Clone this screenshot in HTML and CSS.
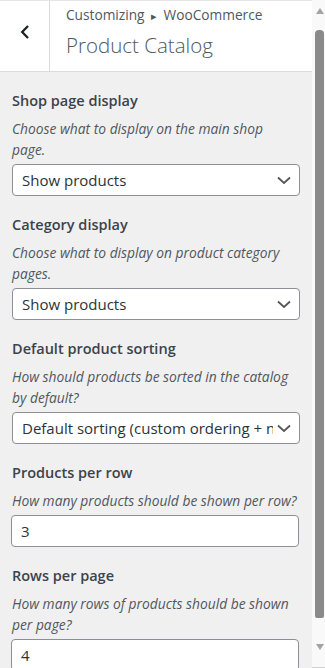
FILE: index.html
```html
<!DOCTYPE html>
<html lang="en">
<head>
  <meta charset="UTF-8">
  <title>Customizing - Product Catalog</title>
  <link rel="stylesheet" href="styles.css">
</head>
<body>
  <div class="panel">
    <div class="panel-header">
      <button class="back-btn" type="button" aria-label="Back">
        <svg width="10" height="14" viewBox="0 0 10 14"><path d="M8 1 L2.2 7 L8 13" fill="none" stroke="#1d2327" stroke-width="2.3"/></svg>
      </button>
      <div class="panel-title">
        <span class="crumb">Customizing <span class="sep">&#9656;</span> WooCommerce</span>
        <h3>Product Catalog</h3>
      </div>
    </div>

    <ul class="controls">
      <li class="control">
        <label class="control-title">Shop page display</label>
        <span class="control-desc">Choose what to display on the main shop<br>page.</span>
        <select>
          <option>Show products</option>
        </select>
      </li>
      <li class="control">
        <label class="control-title">Category display</label>
        <span class="control-desc">Choose what to display on product category pages.</span>
        <select>
          <option>Show products</option>
        </select>
      </li>
      <li class="control">
        <label class="control-title">Default product sorting</label>
        <span class="control-desc">How should products be sorted in the catalog by default?</span>
        <select>
          <option>Default sorting (custom ordering + name)</option>
        </select>
      </li>
      <li class="control">
        <label class="control-title">Products per row</label>
        <span class="control-desc">How many products should be shown per row?</span>
        <input type="number" value="3">
      </li>
      <li class="control">
        <label class="control-title">Rows per page</label>
        <span class="control-desc">How many rows of products should be shown per page?</span>
        <input type="number" value="4">
      </li>
    </ul>
  </div>

  <div class="scrollbar">
    <div class="arrow up"></div>
    <div class="thumb"></div>
    <div class="arrow down"></div>
  </div>
</body>
</html>
```

FILE: styles.css
```css
html, body {
  height: 100%;
}

body {
  margin: 0;
  display: flex;
  overflow: hidden;
  font-family: 'Open Sans', sans-serif;
  background: #f0f0f1;
  color: #3c434a;
}

.panel {
  flex: 1;
  overflow: hidden;
}

.panel-header {
  display: flex;
  height: 72px;
  background: white;
  border-top: 1px solid #e5e5e5;
  border-bottom: 1px solid #dcdcde;
  box-sizing: border-box;
}

.back-btn {
  width: 50px;
  flex: none;
  background: white;
  border: none;
  border-right: 1px solid #dcdcde;
  display: flex;
  align-items: center;
  justify-content: center;
  padding: 0 0 9px;
}

.panel-title {
  padding: 3px 0 0 16px;
}

.crumb {
  display: block;
  font-size: 13.7px;
  line-height: 22px;
  color: #50575e;
}

.crumb .sep {
  font-size: 11px;
  margin: 0 3px;
}

.panel-title h3 {
  margin: 0;
  font-size: 20.5px;
  font-weight: 300;
  line-height: 36px;
  color: #50575e;
}

.controls {
  list-style: none;
  margin: 0;
  padding: 18px 12px 0;
}

.control {
  margin-bottom: 18px;
}

.control-title {
  display: block;
  font-size: 14.5px;
  font-weight: 600;
  line-height: 22px;
  margin-bottom: 6px;
}

.control-desc {
  display: block;
  font-size: 13.8px;
  font-style: italic;
  line-height: 21px;
  color: #50575e;
  margin-bottom: 4px;
}

.control select,
.control input {
  display: block;
  width: 100%;
  height: 32px;
  box-sizing: border-box;
  border: 1px solid #8c8f94;
  border-radius: 4px;
  background-color: white;
  font-family: inherit;
  font-size: 15px;
  color: #2c3338;
  padding: 0 9px;
}

.control select {
  appearance: none;
  padding-right: 26px;
  background-image: url("data:image/svg+xml;charset=US-ASCII,%3Csvg%20width%3D%2220%22%20height%3D%2220%22%20xmlns%3D%22http%3A%2F%2Fwww.w3.org%2F2000%2Fsvg%22%3E%3Cpath%20d%3D%22M4%207.5l6%205.5%206-5.5%22%20fill%3D%22none%22%20stroke%3D%22%23555%22%20stroke-width%3D%221.7%22%2F%3E%3C%2Fsvg%3E");
  background-repeat: no-repeat;
  background-position: right 5px center;
  background-size: 20px 20px;
}

.control input {
  appearance: textfield;
  margin-left: -1px;
}

.scrollbar {
  width: 13px;
  flex: none;
  background: #f9f9f9;
  border-bottom: 1px solid #d0d0d0;
  box-sizing: border-box;
  display: flex;
  flex-direction: column;
  align-items: center;
  padding-left: 2px;
}

.arrow {
  width: 0;
  height: 0;
  border-left: 4px solid transparent;
  border-right: 4px solid transparent;
}

.arrow.up {
  margin-top: 8px;
  border-bottom: 6px solid #a3a3a3;
}

.arrow.down {
  margin-bottom: 17px;
  border-top: 6px solid #a3a3a3;
}

.thumb {
  width: 9px;
  flex: 1;
  margin: 16px 0 26px;
  background: #8a8a8a;
  border-radius: 4px 4px 2px 2px;
}
```
